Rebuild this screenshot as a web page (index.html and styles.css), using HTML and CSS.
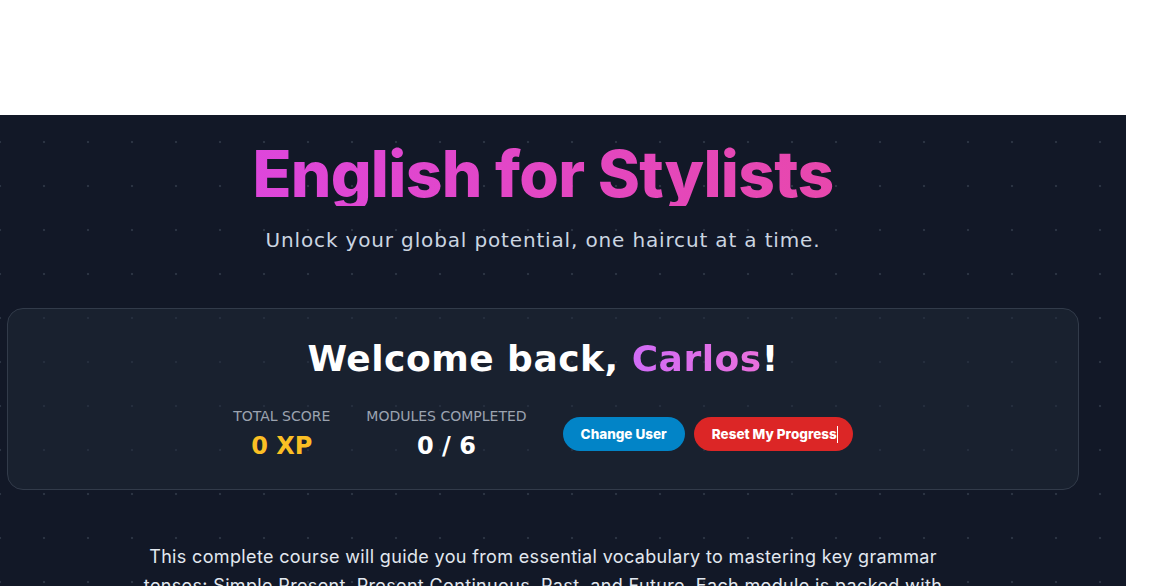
FILE: index.html
```html
<!DOCTYPE html>
<html lang="en">
<head>
<meta charset="utf-8">
<title>English for Stylists</title>
<link rel="stylesheet" href="styles.css">
</head>
<body>
<div class="topbar"></div>
<main class="page">
  <div class="container">
    <header class="hero">
      <h1 class="title">English for Stylists</h1>
      <p class="subtitle">Unlock your global potential, one haircut at a time.</p>
    </header>
    <section class="welcome-card">
      <h2 class="welcome">Welcome back, <span class="name">Carlos</span>!</h2>
      <div class="stats-row">
        <div class="stat">
          <div class="stat-label">Total Score</div>
          <div class="stat-value xp">0 XP</div>
        </div>
        <div class="stat">
          <div class="stat-label">Modules Completed</div>
          <div class="stat-value">0 / 6</div>
        </div>
        <div class="actions">
          <button class="btn btn-blue">Change User</button>
          <button class="btn btn-red">Reset My Progress<span class="caret"></span></button>
        </div>
      </div>
    </section>
    <p class="intro">This complete course will guide you from essential vocabulary to mastering key grammar tenses: Simple Present, Present Continuous, Past, and Future. Each module is packed with practical dialogues, exercises and quizzes designed for the salon.</p>
  </div>
</main>
</body>
</html>
```
FILE: styles.css
```css
html, body {
  margin: 0;
  padding: 0;
  overflow: hidden;
  background: #ffffff;
}
body {
  font-family: Inter, "Noto Sans", sans-serif;
}
.topbar {
  height: 115px;
  background: #ffffff;
}
.page {
  width: 1126px;
  height: 471px;
  background-color: #121827;
  background-image: radial-gradient(circle, #2b3342 1px, transparent 1.6px);
  background-size: 44px 44px;
  background-position: -22px 5px;
  overflow: hidden;
}
.container {
  width: 1072px;
  margin-left: 7px;
  padding-top: 27px;
}
.hero {
  text-align: center;
}
.title {
  margin: 0;
  font-family: Inter, sans-serif;
  font-size: 64px;
  line-height: 1;
  font-weight: 800;
  letter-spacing: -0.7px;
  background: linear-gradient(90deg, #d946ef, #ec4899);
  -webkit-background-clip: text;
  background-clip: text;
  color: transparent;
}
.subtitle {
  margin: 20px 0 0;
  font-family: "DejaVu Sans", sans-serif;
  font-size: 20px;
  line-height: 28px;
  font-weight: 400;
  letter-spacing: 0.85px;
  color: #cbd5e1;
}
.welcome-card {
  margin-top: 54px;
  height: 180px;
  border: 1px solid #323b4a;
  border-radius: 16px;
  background: rgba(31, 41, 55, 0.5);
  text-align: center;
}
.welcome {
  margin: 30px 0 0;
  font-family: "DejaVu Sans", sans-serif;
  font-size: 36px;
  line-height: 40px;
  font-weight: 700;
  letter-spacing: 0.5px;
  color: #ffffff;
}
.name {
  background: linear-gradient(90deg, #d06cf6, #e970dc);
  -webkit-background-clip: text;
  background-clip: text;
  color: transparent;
}
.stats-row {
  margin-top: 27px;
  display: flex;
  justify-content: center;
  align-items: center;
  gap: 36px;
}
.stat {
  display: flex;
  flex-direction: column;
  align-items: center;
}
.stat-label {
  font-family: "DejaVu Sans", sans-serif;
  font-size: 14px;
  line-height: 20px;
  text-transform: uppercase;
  color: #9ca3af;
}
.stat-value {
  margin-top: 4px;
  font-family: "DejaVu Sans", sans-serif;
  font-size: 24px;
  line-height: 32px;
  font-weight: 700;
  color: #ffffff;
}
.stat-value.xp {
  color: #fbbf24;
}
.actions {
  display: flex;
  gap: 9px;
}
.btn {
  height: 34px;
  padding: 0 18px;
  border: none;
  border-radius: 17px;
  font-family: Inter, sans-serif;
  font-size: 13.5px;
  font-weight: 800;
  color: #ffffff;
}
.btn-blue {
  background: #0284c7;
}
.btn-red {
  padding-right: 15px;
  background: #dc2626;
}
.caret {
  display: inline-block;
  width: 1px;
  height: 17px;
  background: #ffffff;
  vertical-align: -4px;
}
.intro {
  width: 800px;
  margin: 52px auto 0;
  font-family: Inter, sans-serif;
  font-size: 18px;
  line-height: 29.25px;
  letter-spacing: 0.35px;
  text-align: center;
  color: #e2e8f0;
}
```
